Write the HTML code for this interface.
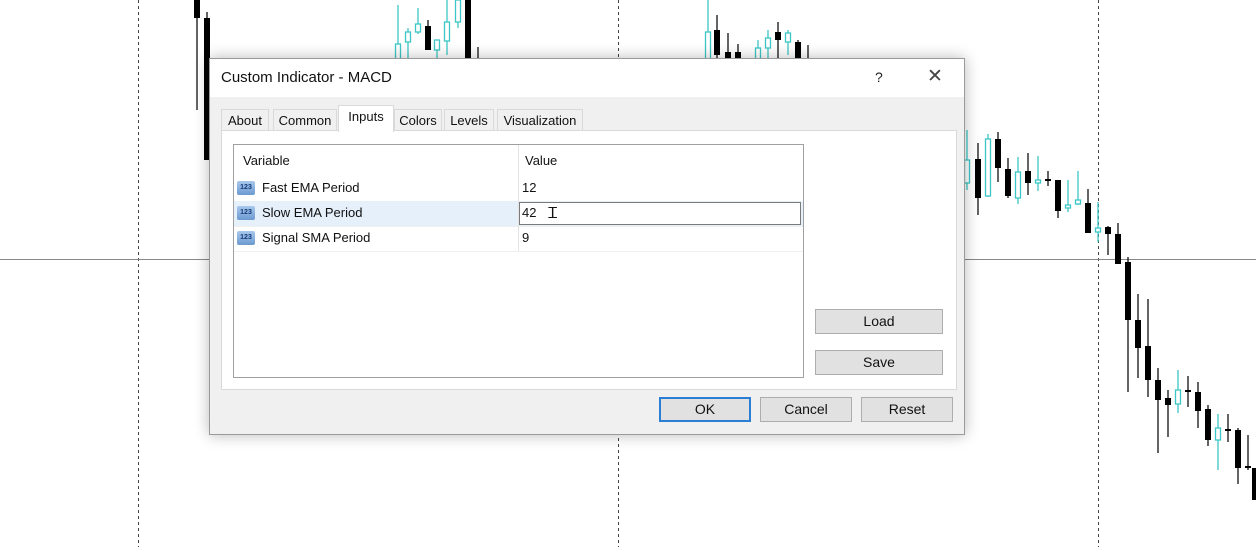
<!DOCTYPE html>
<html><head><meta charset="utf-8"><style>
body{margin:0;width:1256px;height:547px;background:#fff;position:relative;overflow:hidden;font-family:"Liberation Sans",Arial,sans-serif;}
svg.chart{position:absolute;left:0;top:0}
.dlg{position:absolute;left:209px;top:58px;width:754px;height:375px;background:#f0f0f0;border:1px solid #9a9a9a;box-shadow:0 0 14px rgba(0,0,0,.28);}
.title{position:absolute;left:0;top:0;width:754px;height:38px;background:#fff;}
.title span{position:absolute;left:11px;top:10px;font-size:15px;color:#111}
.q{position:absolute;left:665px;top:10px;font-size:14px;color:#222}
.x{position:absolute;left:717px;top:6px;font-size:19px;color:#444;font-weight:300}
.tab{position:absolute;top:50px;height:21px;border:1px solid #d9d9d9;border-bottom:none;background:#f0f0f0;font-size:13px;color:#111;line-height:21px;text-align:center;}
.tab.act{top:46px;height:26px;background:#fff;line-height:22px;z-index:2}
.panel{position:absolute;left:11px;top:71px;width:734px;height:258px;background:#fff;border:1px solid #d9d9d9}
.list{position:absolute;left:11px;top:13px;width:569px;height:232px;border:1px solid #a0a0a0;background:#fff}
.hdr{position:absolute;top:0;height:31px;font-size:13px;line-height:31px;color:#111}
.row{position:absolute;left:0;width:569px;height:25px;font-size:13px;line-height:24px;color:#111;border-bottom:1px solid #f0f0f0}
.row .ic{position:absolute;left:3px;top:5px;width:18px;height:14px;background:linear-gradient(#a8c8ec,#6c9ad0);border-radius:2px;font-size:7px;line-height:14px;text-align:center;color:#163a7a;font-weight:bold}
.row .n{position:absolute;left:28px}
.row .v{position:absolute;left:288px}
.vl{position:absolute;left:284px;top:0;width:1px;height:107px;background:#e3e3e3}
.btn{position:absolute;height:23px;background:#e1e1e1;border:1px solid #adadad;font-size:14px;color:#111;text-align:center;line-height:23px}
</style></head><body>
<svg class="chart" width="1256" height="547">
<g stroke="#444" stroke-width="1" stroke-dasharray="3,3">
<line x1="138.5" y1="0" x2="138.5" y2="547"/><line x1="618.5" y1="0" x2="618.5" y2="547"/><line x1="1098.5" y1="0" x2="1098.5" y2="547"/>
</g>
<line x1="0" y1="259.5" x2="1256" y2="259.5" stroke="#888" stroke-width="1"/>
<g stroke="#111" stroke-width="1.3">
<line x1="197" y1="0" x2="197" y2="110"/><line x1="207" y1="12" x2="207" y2="160"/>
<line x1="428" y1="20" x2="428" y2="50"/><line x1="478" y1="47" x2="478" y2="60"/>
<line x1="717" y1="15" x2="717" y2="60"/><line x1="728" y1="33" x2="728" y2="60"/><line x1="738" y1="44" x2="738" y2="60"/><line x1="778" y1="22" x2="778" y2="60"/><line x1="798" y1="40" x2="798" y2="60"/><line x1="808" y1="45" x2="808" y2="60"/>
<line x1="978" y1="143" x2="978" y2="215"/><line x1="998" y1="132" x2="998" y2="182"/><line x1="1008" y1="158" x2="1008" y2="198"/><line x1="1028" y1="153" x2="1028" y2="195"/><line x1="1048" y1="171" x2="1048" y2="186"/><line x1="1058" y1="180" x2="1058" y2="218"/><line x1="1088" y1="189" x2="1088" y2="233"/><line x1="1108" y1="226" x2="1108" y2="255"/><line x1="1118" y1="223" x2="1118" y2="264"/><line x1="1128" y1="257" x2="1128" y2="392"/><line x1="1138" y1="294" x2="1138" y2="378"/><line x1="1148" y1="299" x2="1148" y2="397"/><line x1="1158" y1="368" x2="1158" y2="453"/><line x1="1168" y1="390" x2="1168" y2="437"/><line x1="1188" y1="376" x2="1188" y2="407"/><line x1="1198" y1="382" x2="1198" y2="428"/><line x1="1208" y1="405" x2="1208" y2="446"/><line x1="1228" y1="414" x2="1228" y2="442"/><line x1="1238" y1="428" x2="1238" y2="484"/><line x1="1248" y1="435" x2="1248" y2="470"/>
</g>
<g fill="#000">
<rect x="194" y="0" width="6" height="18"/><rect x="204" y="18" width="6" height="142"/>
<rect x="425" y="26" width="6" height="24"/><rect x="465" y="0" width="6" height="60"/>
<rect x="714" y="30" width="6" height="25"/><rect x="725" y="52" width="6" height="8"/><rect x="735" y="52" width="6" height="8"/><rect x="775" y="32" width="6" height="8"/><rect x="795" y="42" width="6" height="18"/>
<rect x="975" y="159" width="6" height="39"/><rect x="995" y="139" width="6" height="29"/><rect x="1005" y="169" width="6" height="27"/><rect x="1025" y="171" width="6" height="12"/><rect x="1045" y="179" width="6" height="2"/><rect x="1055" y="180" width="6" height="31"/><rect x="1085" y="203" width="6" height="30"/><rect x="1105" y="227" width="6" height="7"/><rect x="1115" y="234" width="6" height="30"/><rect x="1125" y="262" width="6" height="58"/><rect x="1135" y="320" width="6" height="28"/><rect x="1145" y="346" width="6" height="34"/><rect x="1155" y="380" width="6" height="20"/><rect x="1165" y="398" width="6" height="7"/><rect x="1185" y="390" width="6" height="2"/><rect x="1195" y="392" width="6" height="19"/><rect x="1205" y="409" width="6" height="31"/><rect x="1225" y="429" width="6" height="2"/><rect x="1235" y="430" width="6" height="38"/><rect x="1245" y="466" width="6" height="2"/><rect x="1252" y="468" width="6" height="32"/>
</g>
<g stroke="#3cc6c6" stroke-width="1.3" fill="#fff">
<line x1="398" y1="5" x2="398" y2="60"/><rect x="395.5" y="44" width="5" height="16"/>
<line x1="408" y1="28" x2="408" y2="65"/><rect x="405.5" y="32" width="5" height="10"/>
<line x1="418" y1="8" x2="418" y2="34"/><rect x="415.5" y="24" width="5" height="8"/>
<line x1="437" y1="40" x2="437" y2="60"/><rect x="434.5" y="40" width="5" height="10"/>
<line x1="447" y1="0" x2="447" y2="55"/><rect x="444.5" y="22" width="5" height="19"/>
<line x1="458" y1="0" x2="458" y2="28"/><rect x="455.5" y="0" width="5" height="22"/>
<line x1="708" y1="0" x2="708" y2="60"/><rect x="705.5" y="32" width="5" height="28"/>
<line x1="758" y1="40" x2="758" y2="60"/><rect x="755.5" y="48" width="5" height="12"/>
<line x1="768" y1="30" x2="768" y2="60"/><rect x="765.5" y="38" width="5" height="10"/>
<line x1="788" y1="30" x2="788" y2="55"/><rect x="785.5" y="33" width="5" height="9"/>
<line x1="967" y1="130" x2="967" y2="190"/><rect x="964.5" y="160" width="5" height="23"/>
<line x1="988" y1="134" x2="988" y2="197"/><rect x="985.5" y="139" width="5" height="57"/>
<line x1="1018" y1="157" x2="1018" y2="204"/><rect x="1015.5" y="172" width="5" height="26"/>
<line x1="1038" y1="156" x2="1038" y2="191"/><rect x="1035.5" y="180" width="5" height="3"/>
<line x1="1068" y1="180" x2="1068" y2="212"/><rect x="1065.5" y="205" width="5" height="3"/>
<line x1="1078" y1="171" x2="1078" y2="205"/><rect x="1075.5" y="200" width="5" height="4"/>
<line x1="1098" y1="202" x2="1098" y2="242"/><rect x="1095.5" y="228" width="5" height="4"/>
<line x1="1178" y1="370" x2="1178" y2="413"/><rect x="1175.5" y="390" width="5" height="14"/>
<line x1="1218" y1="414" x2="1218" y2="470"/><rect x="1215.5" y="428" width="5" height="12"/>
</g>
</svg>
<div class="dlg">
<div class="title"><span>Custom Indicator - MACD</span><div class="q">?</div><div class="x">✕</div></div>
<div class="tab" style="left:11px;width:46px">About</div>
<div class="tab" style="left:63px;width:62px">Common</div>
<div class="tab act" style="left:128px;width:54px">Inputs</div>
<div class="tab" style="left:184px;width:46px">Colors</div>
<div class="tab" style="left:234px;width:48px">Levels</div>
<div class="tab" style="left:287px;width:84px">Visualization</div>
<div class="panel">
<div class="list">
<div class="hdr" style="left:9px">Variable</div>
<div class="hdr" style="left:291px">Value</div>
<div style="position:absolute;left:284px;top:0;width:1px;height:31px;background:#e3e3e3"></div>
<div class="row" style="top:31px"><div class="ic">123</div><span class="n">Fast EMA Period</span><span class="v">12</span></div>
<div class="row" style="top:56px;background:#e5f0fb"><div class="ic">123</div><span class="n">Slow EMA Period</span><div style="position:absolute;left:285px;top:1px;width:280px;height:21px;background:#fff;border:1px solid #7a7a7a"></div><span class="v" style="left:288px">42</span><span style="position:absolute;left:314px;top:1px;font-size:15px">Ꮖ</span></div>
<div class="row" style="top:81px"><div class="ic">123</div><span class="n">Signal SMA Period</span><span class="v">9</span></div>
<div class="vl" style="top:31px;height:75px"></div>
</div>
<div class="btn" style="left:593px;top:178px;width:126px">Load</div>
<div class="btn" style="left:593px;top:219px;width:126px">Save</div>
</div>
<div class="btn" style="left:449px;top:338px;width:88px;border:2px solid #2a7fd4;height:21px;line-height:21px">OK</div>
<div class="btn" style="left:550px;top:338px;width:90px">Cancel</div>
<div class="btn" style="left:651px;top:338px;width:90px">Reset</div>
</div>
</body></html>
